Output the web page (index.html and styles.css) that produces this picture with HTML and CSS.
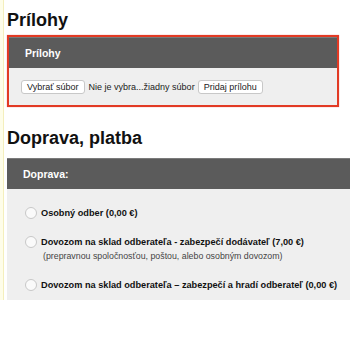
FILE: index.html
```html
<!DOCTYPE html>
<html lang="sk">
<head>
    <meta charset="UTF-8">
    <title>Prílohy, Doprava a platba</title>
    <link rel="stylesheet" href="styles.css">
</head>
<body>
    <div class="page">
        <div class="content">
            <h1>Prílohy</h1>
            <div class="box-highlight">
                <div class="panel">
                    <div class="panel-head">Prílohy</div>
                    <div class="panel-body files">
                        <button type="button" class="btn">Vybrať súbor</button>
                        <span class="file-name">Nie je vybra...žiadny súbor</span>
                        <button type="button" class="btn">Pridaj prílohu</button>
                    </div>
                </div>
            </div>

            <h1 class="second">Doprava, platba</h1>
            <div class="panel">
                <div class="panel-head">Doprava:</div>
                <div class="panel-body options">
                    <label class="option">
                        <span class="radio"></span>
                        <span class="option-text">Osobný odber (0,00 €)</span>
                    </label>
                    <label class="option">
                        <span class="radio"></span>
                        <span class="option-text">Dovozom na sklad odberateľa - zabezpečí dodávateľ (7,00 €)
                            <small>(prepravnou spoločnosťou, poštou, alebo osobným dovozom)</small>
                        </span>
                    </label>
                    <label class="option">
                        <span class="radio"></span>
                        <span class="option-text">Dovozom na sklad odberateľa – zabezpečí a hradí odberateľ (0,00 €)</span>
                    </label>
                </div>
            </div>
        </div>
    </div>
</body>
</html>
```

FILE: styles.css
```css
body {
    margin: 0;
    padding: 0;
    font-family: "Liberation Sans", Arial, sans-serif;
    background: #fff;
}
.page {
    background: #fefde9;
    padding-left: 3px;
}
.content {
    background: #fff;
    border-left: 1px solid #f4efbc;
    padding-left: 3px;
}
h1 {
    margin: 0;
    padding: 9px 0 4px 0;
    font-size: 18px;
    font-weight: bold;
    color: #111;
    line-height: 22px;
}
h1.second {
    padding: 20px 0 9px 0;
}
.box-highlight {
    border: 2px solid #e23a24;
    width: 328px;
    box-shadow: 0 0 1px #e88;
}
.panel {
    background: #efefef;
}
.panel-head {
    background: #5b5b5b;
    border-top: 1px solid #7a7a7a;
    color: #fff;
    font-weight: bold;
    font-size: 10.5px;
    padding: 0 16px;
    height: 30px;
    line-height: 30px;
}
.panel-body.files {
    display: flex;
    align-items: center;
    padding: 12px 12px 11px 12px;
    font-size: 9px;
    color: #222;
}
.btn {
    font-family: "Liberation Sans", Arial, sans-serif;
    font-size: 9px;
    color: #222;
    background: #fff;
    border: 1px solid #c8c8c8;
    border-radius: 3px;
    padding: 1px 5px;
    height: 14px;
    line-height: 10px;
}
.file-name {
    margin: 0 3px 0 4px;
}
.panel-body.options {
    padding: 18px 0 9px 18px;
}
.option {
    display: flex;
    align-items: flex-start;
    font-size: 9.2px;
    font-weight: bold;
    color: #111;
    margin-bottom: 17px;
}
.option:last-child {
    margin-bottom: 0;
}
.radio {
    width: 10px;
    height: 10px;
    border: 1px solid #c8c8c8;
    border-radius: 50%;
    background: #fafafa;
    margin-right: 4px;
    flex: none;
}
.option-text {
    line-height: 12px;
}
.option-text small {
    display: block;
    font-weight: normal;
    font-size: 8.8px;
    color: #444;
    margin-top: 2px;
    margin-left: 2px;
}
```
